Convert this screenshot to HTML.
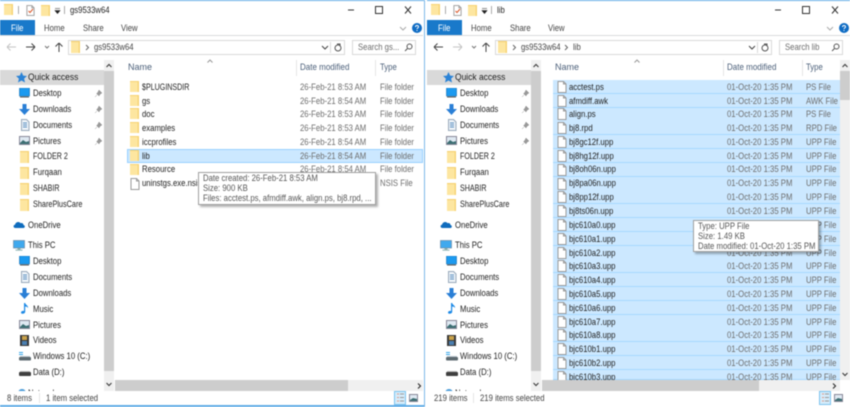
<!DOCTYPE html>
<html><head><meta charset="utf-8"><style>
html,body{margin:0;padding:0;width:850px;height:407px;overflow:hidden;background:#fff}
body{font-family:"Liberation Sans",sans-serif;font-size:9px;color:#222;filter:blur(.4px)}
.w{position:absolute;top:0;height:407px;overflow:hidden;background:#fff}
.w div,.w span,.w svg{position:absolute}
.t{white-space:nowrap;line-height:12px;height:12px;transform:scaleX(.86);transform-origin:0 50%}
.q{transform:scaleX(.94)}.c{transform:scaleX(.79)}.s{transform:scaleX(.81)}.n{transform:none}
.h{color:#4c607a}.h2{color:#4c607a;transform:scaleX(.89)}.g{color:#6d6d6d}.tab{color:#444}
.tip{background:#fff;border:1px solid #a0a0a0;box-shadow:2px 2px 2px rgba(0,0,0,.3)}
.tip .t{color:#575757;left:4px}
.sel{background:#cce8ff;border-bottom:1px solid #a6d8ff;box-sizing:border-box}
</style></head><body>
<svg width="0" height="0" style="position:absolute"><defs>
<symbol id="fo" viewBox="0 0 10 11" preserveAspectRatio="none"><path d="M0 0h10v11H0z" fill="#f6d272"/><path d="M0 1h8.500v10H0z" fill="#fde6a0"/></symbol>
<symbol id="fi" viewBox="0 0 10 12"><path d="M1 .5h5.500L9 3v8.500H1z" fill="#fff" stroke="#9a9a9a"/><path d="M6.500.5V3H9" fill="none" stroke="#9a9a9a"/></symbol>
<symbol id="de" viewBox="0 0 11 10"><rect x=".5" y="0" width="10" height="8" fill="#1c9af0" stroke="#0b6cb5" stroke-width=".6"/><rect x="1" y="8.500" width="9" height="1" fill="#555"/></symbol>
<symbol id="dl" viewBox="0 0 11 11"><path d="M3.500 0h4v5H11L5.500 11 0 5h3.500z" fill="#2a7fd6"/></symbol>
<symbol id="do" viewBox="0 0 10 12"><path d="M1.500.5h5L9 3v8.500H1.500z" fill="#eef3f8" stroke="#9ab"/><path d="M3 4h4M3 6h4M3 8h4" stroke="#5a8fc0"/></symbol>
<symbol id="pi" viewBox="0 0 11 9"><rect x=".5" y=".5" width="10" height="8" fill="#dfe9f2" stroke="#889"/><path d="M1 7l3-3 3 2 3-1v3H1z" fill="#3c6f73"/></symbol>
<symbol id="pn" viewBox="0 0 7 7"><path d="M4 0l3 3-1 .5-1.500 1.500-.5 1L1.500 3.500l1-.5L3.500 1zM2 5L0 7" fill="#999" stroke="#999" stroke-width=".5"/></symbol>
<symbol id="st" viewBox="0 0 11 11"><path d="M5.500 0l1.700 3.600 3.800.4-2.900 2.600.9 3.900-3.500-2-3.500 2 .9-3.900L0 4l3.800-.4z" fill="#2b83d6"/></symbol>
<symbol id="od" viewBox="0 0 12 7"><path d="M2.500 7C0 7 0 4 2 3.800 2.500 1 6 0 7.500 2.200 10 1.500 10.500 3.500 10.500 4 12.500 4.500 12 7 10.500 7z" fill="#0f6cbd"/></symbol>
<symbol id="pc" viewBox="0 0 12 11"><rect x=".5" y=".5" width="11" height="7.500" fill="#3fa9ee" stroke="#6b8aa5" stroke-width=".7"/><rect x="4.500" y="8" width="3" height="1.500" fill="#8aa"/><rect x="2.500" y="9.500" width="7" height="1.200" fill="#9bb"/></symbol>
<symbol id="mu" viewBox="0 0 8 11"><path d="M3 0h1.200c.3 2 3.300 2.500 2.800 5C6.500 3.800 5 3.500 4.200 3.500V9C4 11 0 11.500 0 9.500 0 8 2 7.500 3 8z" fill="#1e8ae6"/></symbol>
<symbol id="vi" viewBox="0 0 9 11"><rect width="9" height="11" fill="#3a3a3a"/><rect x="2" y="1" width="5" height="4" fill="#c9a24a"/><rect x="2" y="6" width="5" height="4" fill="#4a7fb0"/></symbol>
<symbol id="c" viewBox="0 0 12 9"><path d="M0 0h4v1H0zM0 2h4v1H0z" fill="#35a5e8"/><rect x="0" y="5" width="12" height="3.500" rx="1" fill="#5d6a70"/><rect x="1" y="4" width="10" height="1" fill="#b8c4cc"/></symbol>
<symbol id="d" viewBox="0 0 12 5"><rect x="0" y="1" width="12" height="4" rx="1" fill="#3f3f3f"/><rect x="1" y="0" width="10" height="1" fill="#bbb"/></symbol>
</defs></svg>

<!-- LEFT WINDOW -->
<div class="w" style="left:0;width:425px;border-right:1px solid #7db9e8;box-sizing:border-box">
<div style="left:0;top:0;width:425px;height:1px;background:#62ace6"></div>
<svg style="left:4px;top:4px" width="9" height="11"><use href="#fo"/></svg>
<div style="left:18px;top:6px;width:1px;height:8px;background:#aaa"></div>
<svg style="left:26px;top:5px" width="9" height="11"><use href="#fi"/><path d="M2.500 6l1.500 1.500L7 4" stroke="#d9582b" fill="none"/></svg>
<svg style="left:41px;top:5px" width="9" height="11"><use href="#fo"/></svg>
<svg style="left:54px;top:8px" width="7" height="6"><path d="M1 .5h5M1 2.500h5l-2.500 3z" stroke="#222" fill="#222" stroke-width=".6"/></svg>
<div style="left:64px;top:6px;width:1px;height:8px;background:#aaa"></div>
<div class="t" style="left:70px;top:4px">gs9533w64</div>
<svg style="left:345px;top:4px" width="70" height="12"><path d="M3 6h6" stroke="#333"/><rect x="30.500" y="2.500" width="7" height="7" fill="none" stroke="#333"/><path d="M60 2.500l6 7M66 2.500l-6 7" stroke="#333"/></svg>

<div style="left:0;top:20px;width:35px;height:15px;background:#1979ca"></div>
<div class="t" style="left:11px;top:22px;color:#fff">File</div>
<div class="t tab" style="left:44px;top:22px">Home</div>
<div class="t tab" style="left:83px;top:22px">Share</div>
<div class="t tab" style="left:121px;top:22px">View</div>
<svg style="left:399px;top:23px" width="24" height="12"><path d="M1 4l3 3 3-3" stroke="#aaa" fill="none"/><circle cx="18" cy="5" r="5" fill="#0f6cc4"/><path d="M16.500 4c0-2 3-2 3 0 0 1-1.500 1-1.500 2M18 7v1" stroke="#fff" fill="none"/></svg>
<div style="left:0;top:35px;width:423px;height:1px;background:#dadbdc"></div>

<svg style="left:5px;top:41px" width="62" height="13"><path d="M2 6h9M2 6l3.500-3.500M2 6l3.500 3.500" stroke="#c4c4c4" fill="none"/><path d="M21 6h9M30 6l-3.500-3.500M30 6l-3.500 3.500" stroke="#444" fill="none"/><path d="M40 5l2 2 2-2" stroke="#777" fill="none"/><path d="M54 11V2M54 2l-3.500 3.500M54 2l3.500 3.500" stroke="#444" fill="none"/></svg>
<div style="left:68px;top:40px;width:277px;height:15px;border:1px solid #d9d9d9;box-sizing:border-box"></div>
<svg style="left:71px;top:41px" width="9" height="12"><use href="#fo"/></svg>
<svg style="left:85px;top:44px" width="5" height="7"><path d="M1 1l2.500 2.500L1 6" stroke="#666" fill="none"/></svg>
<div class="t" style="left:94px;top:41px;color:#444">gs9533w64</div>
<svg style="left:321px;top:42px" width="24" height="11"><path d="M1 4l3 3 3-3" stroke="#444" fill="none"/><path d="M9.500 0v11" stroke="#d9d9d9"/><circle cx="17" cy="6" r="3" stroke="#555" fill="none"/><path d="M16 2h3v2" stroke="#555" fill="none"/></svg>
<div style="left:352px;top:40px;width:64px;height:15px;border:1px solid #d9d9d9;box-sizing:border-box"></div>
<div class="t g" style="left:358px;top:41px">Search gs...</div>
<svg style="left:404px;top:43px" width="9" height="9"><circle cx="5.500" cy="3.500" r="2.500" stroke="#555" fill="none"/><path d="M3.500 5.500L1 8" stroke="#555"/></svg>

<!-- nav -->
<div style="left:0;top:70px;width:104px;height:15px;background:#d9d9d9"></div>
<div style="left:104px;top:60px;width:10px;height:331px;background:#f0f0f0"></div>
<div style="left:104px;top:71px;width:10px;height:300px;background:#cdcdcd"></div>
<svg style="left:106px;top:63px" width="6" height="5"><path d="M.5 4L3 1.500 5.500 4" stroke="#444" fill="none" stroke-width="1.200"/></svg>
<svg style="left:106px;top:382px" width="6" height="5"><path d="M.5 1L3 3.500 5.500 1" stroke="#444" fill="none" stroke-width="1.200"/></svg>
<svg style="left:16px;top:72px" width="11" height="11"><use href="#st"/></svg><div class="t q" style="left:28px;top:71px">Quick access</div>
<svg style="left:19px;top:88px" width="11" height="10"><use href="#de"/></svg><div class="t" style="left:33px;top:87px">Desktop</div>
<svg style="left:19px;top:104px" width="11" height="11"><use href="#dl"/></svg><div class="t" style="left:33px;top:103px">Downloads</div>
<svg style="left:20px;top:119px" width="10" height="12"><use href="#do"/></svg><div class="t" style="left:33px;top:119px">Documents</div>
<svg style="left:19px;top:136px" width="11" height="9"><use href="#pi"/></svg><div class="t" style="left:33px;top:135px">Pictures</div>
<svg style="left:95px;top:90px" width="7" height="7"><use href="#pn"/></svg>
<svg style="left:95px;top:106px" width="7" height="7"><use href="#pn"/></svg>
<svg style="left:95px;top:122px" width="7" height="7"><use href="#pn"/></svg>
<svg style="left:95px;top:138px" width="7" height="7"><use href="#pn"/></svg>
<svg style="left:20px;top:151px" width="9" height="12"><use href="#fo"/></svg><div class="t c" style="left:33px;top:150px">FOLDER 2</div>
<svg style="left:20px;top:167px" width="9" height="12"><use href="#fo"/></svg><div class="t" style="left:33px;top:166px">Furqaan</div>
<svg style="left:20px;top:183px" width="9" height="12"><use href="#fo"/></svg><div class="t c" style="left:33px;top:182px">SHABIR</div>
<svg style="left:20px;top:199px" width="9" height="12"><use href="#fo"/></svg><div class="t s" style="left:33px;top:198px">SharePlusCare</div>
<svg style="left:13px;top:221px" width="12" height="7"><use href="#od"/></svg><div class="t" style="left:28px;top:219px">OneDrive</div>
<svg style="left:13px;top:240px" width="12" height="11"><use href="#pc"/></svg><div class="t" style="left:28px;top:239px">This PC</div>
<svg style="left:19px;top:256px" width="11" height="10"><use href="#de"/></svg><div class="t" style="left:33px;top:255px">Desktop</div>
<svg style="left:20px;top:271px" width="10" height="12"><use href="#do"/></svg><div class="t" style="left:33px;top:271px">Documents</div>
<svg style="left:19px;top:288px" width="11" height="11"><use href="#dl"/></svg><div class="t" style="left:33px;top:287px">Downloads</div>
<svg style="left:21px;top:303px" width="8" height="11"><use href="#mu"/></svg><div class="t" style="left:33px;top:303px">Music</div>
<svg style="left:19px;top:320px" width="11" height="9"><use href="#pi"/></svg><div class="t" style="left:33px;top:319px">Pictures</div>
<svg style="left:20px;top:335px" width="9" height="11"><use href="#vi"/></svg><div class="t" style="left:33px;top:334px">Videos</div>
<svg style="left:19px;top:352px" width="12" height="9"><use href="#c"/></svg><div class="t" style="left:33px;top:350px">Windows 10 (C:)</div>
<svg style="left:19px;top:371px" width="12" height="5"><use href="#d"/></svg><div class="t" style="left:33px;top:366px">Data (D:)</div>
<div style="left:0;top:388px;width:104px;height:3px;overflow:hidden"><svg style="left:17px;top:0" width="10" height="3"><circle cx="5" cy="5" r="4" fill="#4a9bd8"/></svg><div class="t" style="left:28px;top:-1px">Network</div></div>

<!-- list header -->
<svg style="left:207px;top:59px" width="6" height="4"><path d="M.5 3.500L3 1l2.500 2.500" stroke="#999" fill="none"/></svg>
<div class="t h n" style="left:128px;top:61px">Name</div>
<div style="left:296px;top:60px;width:1px;height:16px;background:#e5e5e5"></div>
<div class="t h2" style="left:300px;top:61px">Date modified</div>
<div style="left:375px;top:60px;width:1px;height:16px;background:#e5e5e5"></div>
<div class="t h" style="left:380px;top:61px">Type</div>

<div class="sel" style="left:127px;top:149px;width:296px;height:14px;border:1px solid #99d1ff"></div>

<svg style="left:130px;top:81px" width="9" height="11"><use href="#fo"/></svg><div class="t c" style="left:142px;top:81px">$PLUGINSDIR</div><div class="t g" style="left:300px;top:81px">26-Feb-21 8:53 AM</div><div class="t g" style="left:380px;top:81px">File folder</div>
<svg style="left:130px;top:95px" width="9" height="11"><use href="#fo"/></svg><div class="t" style="left:142px;top:95px">gs</div><div class="t g" style="left:300px;top:95px">26-Feb-21 8:54 AM</div><div class="t g" style="left:380px;top:95px">File folder</div>
<svg style="left:130px;top:108px" width="9" height="11"><use href="#fo"/></svg><div class="t" style="left:142px;top:108px">doc</div><div class="t g" style="left:300px;top:108px">26-Feb-21 8:53 AM</div><div class="t g" style="left:380px;top:108px">File folder</div>
<svg style="left:130px;top:122px" width="9" height="11"><use href="#fo"/></svg><div class="t" style="left:142px;top:122px">examples</div><div class="t g" style="left:300px;top:122px">26-Feb-21 8:53 AM</div><div class="t g" style="left:380px;top:122px">File folder</div>
<svg style="left:130px;top:136px" width="9" height="11"><use href="#fo"/></svg><div class="t" style="left:142px;top:136px">iccprofiles</div><div class="t g" style="left:300px;top:136px">26-Feb-21 8:54 AM</div><div class="t g" style="left:380px;top:136px">File folder</div>
<svg style="left:130px;top:150px" width="9" height="11"><use href="#fo"/></svg><div class="t" style="left:142px;top:150px">lib</div><div class="t g" style="left:300px;top:150px">26-Feb-21 8:54 AM</div><div class="t g" style="left:380px;top:150px">File folder</div>
<svg style="left:130px;top:164px" width="9" height="11"><use href="#fo"/></svg><div class="t" style="left:142px;top:163px">Resource</div><div class="t g" style="left:300px;top:163px">26-Feb-21 8:54 AM</div><div class="t g" style="left:380px;top:163px">File folder</div>
<svg style="left:130px;top:178px" width="10" height="12"><use href="#fi"/></svg><div class="t" style="left:142px;top:177px">uninstgs.exe.nsis</div><div class="t g" style="left:380px;top:177px">NSIS File</div>

<div class="tip" style="left:198px;top:172px;width:178px;height:33px;box-sizing:border-box">
<div class="t" style="top:-1px">Date created: 26-Feb-21 8:53 AM</div>
<div class="t" style="top:9px">Size: 900 KB</div>
<div class="t" style="top:19px">Files: acctest.ps, afmdiff.awk, align.ps, bj8.rpd, ...</div>
</div>

<div style="left:115px;top:380px;width:308px;height:11px;background:#f0f0f0"></div>
<div style="left:115px;top:380px;width:233px;height:11px;background:#cdcdcd"></div>
<svg style="left:417px;top:383px" width="5" height="6"><path d="M1 .5L3.500 3 1 5.500" stroke="#333" fill="none" stroke-width="1.200"/></svg>

<div class="t" style="left:7px;top:392px;color:#444">8 items</div>
<div style="left:39px;top:393px;width:1px;height:10px;background:#e5e5e5"></div>
<div class="t" style="left:46px;top:392px;color:#444">1 item selected</div>
<div style="left:394px;top:391px;width:12px;height:14px;background:#d5ecfb;border:1px solid #7cc4ef;box-sizing:border-box"></div>
<svg style="left:396px;top:393px" width="24" height="10"><path d="M1 1h2M1 4.500h2M1 8h2" stroke="#d98" /><path d="M4 1h4M4 4.500h4M4 8h4" stroke="#999"/><rect x="13.500" y="1.500" width="8" height="7" fill="#dfe9f2" stroke="#889"/><path d="M14 7l3-2 4 1v2h-7z" fill="#3c6f73"/></svg>
<div style="left:0;top:405px;width:425px;height:2px;background:#62ace6"></div>
</div>

<!-- RIGHT WINDOW -->
<div class="w" style="left:427px;width:423px">
<div style="left:0;top:0;width:423px;height:1px;background:#62ace6"></div>
<svg style="left:4px;top:4px" width="9" height="11"><use href="#fo"/></svg>
<div style="left:18px;top:6px;width:1px;height:8px;background:#aaa"></div>
<svg style="left:26px;top:5px" width="9" height="11"><use href="#fi"/><path d="M2.500 6l1.500 1.500L7 4" stroke="#d9582b" fill="none"/></svg>
<svg style="left:41px;top:5px" width="9" height="11"><use href="#fo"/></svg>
<svg style="left:54px;top:8px" width="7" height="6"><path d="M1 .5h5M1 2.500h5l-2.500 3z" stroke="#222" fill="#222" stroke-width=".6"/></svg>
<div style="left:64px;top:6px;width:1px;height:8px;background:#aaa"></div>
<div class="t" style="left:70px;top:4px">lib</div>
<svg style="left:345px;top:4px" width="70" height="12"><path d="M3 6h6" stroke="#333"/><rect x="30.500" y="2.500" width="7" height="7" fill="none" stroke="#333"/><path d="M60 2.500l6 7M66 2.500l-6 7" stroke="#333"/></svg>

<div style="left:0;top:20px;width:35px;height:15px;background:#1979ca"></div>
<div class="t" style="left:11px;top:22px;color:#fff">File</div>
<div class="t tab" style="left:44px;top:22px">Home</div>
<div class="t tab" style="left:83px;top:22px">Share</div>
<div class="t tab" style="left:121px;top:22px">View</div>
<svg style="left:399px;top:23px" width="24" height="12"><path d="M1 4l3 3 3-3" stroke="#aaa" fill="none"/><circle cx="18" cy="5" r="5" fill="#0f6cc4"/><path d="M16.500 4c0-2 3-2 3 0 0 1-1.500 1-1.500 2M18 7v1" stroke="#fff" fill="none"/></svg>
<div style="left:0;top:35px;width:423px;height:1px;background:#dadbdc"></div>

<svg style="left:5px;top:41px" width="62" height="13"><path d="M2 6h9M2 6l3.500-3.500M2 6l3.500 3.500" stroke="#444" fill="none"/><path d="M21 6h9M30 6l-3.500-3.500M30 6l-3.500 3.500" stroke="#c4c4c4" fill="none"/><path d="M40 5l2 2 2-2" stroke="#777" fill="none"/><path d="M54 11V2M54 2l-3.500 3.500M54 2l3.500 3.500" stroke="#444" fill="none"/></svg>
<div style="left:68px;top:40px;width:277px;height:15px;border:1px solid #d9d9d9;box-sizing:border-box"></div>
<svg style="left:71px;top:41px" width="9" height="12"><use href="#fo"/></svg>
<svg style="left:85px;top:44px" width="5" height="7"><path d="M1 1l2.500 2.500L1 6" stroke="#666" fill="none"/></svg>
<div class="t" style="left:94px;top:41px;color:#444">gs9533w64</div>
<svg style="left:137px;top:44px" width="5" height="7"><path d="M1 1l2.500 2.500L1 6" stroke="#666" fill="none"/></svg>
<div class="t" style="left:146px;top:41px;color:#444">lib</div>
<svg style="left:321px;top:42px" width="24" height="11"><path d="M1 4l3 3 3-3" stroke="#444" fill="none"/><path d="M9.500 0v11" stroke="#d9d9d9"/><circle cx="17" cy="6" r="3" stroke="#555" fill="none"/><path d="M16 2h3v2" stroke="#555" fill="none"/></svg>
<div style="left:352px;top:40px;width:64px;height:15px;border:1px solid #d9d9d9;box-sizing:border-box"></div>
<div class="t g" style="left:358px;top:41px">Search lib</div>
<svg style="left:404px;top:43px" width="9" height="9"><circle cx="5.500" cy="3.500" r="2.500" stroke="#555" fill="none"/><path d="M3.500 5.500L1 8" stroke="#555"/></svg>

<!-- nav -->
<div style="left:0;top:70px;width:104px;height:15px;background:#d9d9d9"></div>
<div style="left:104px;top:60px;width:10px;height:331px;background:#f0f0f0"></div>
<div style="left:104px;top:71px;width:10px;height:300px;background:#cdcdcd"></div>
<svg style="left:106px;top:63px" width="6" height="5"><path d="M.5 4L3 1.500 5.500 4" stroke="#444" fill="none" stroke-width="1.200"/></svg>
<svg style="left:106px;top:382px" width="6" height="5"><path d="M.5 1L3 3.500 5.500 1" stroke="#444" fill="none" stroke-width="1.200"/></svg>
<svg style="left:16px;top:72px" width="11" height="11"><use href="#st"/></svg><div class="t q" style="left:28px;top:71px">Quick access</div>
<svg style="left:19px;top:88px" width="11" height="10"><use href="#de"/></svg><div class="t" style="left:33px;top:87px">Desktop</div>
<svg style="left:19px;top:104px" width="11" height="11"><use href="#dl"/></svg><div class="t" style="left:33px;top:103px">Downloads</div>
<svg style="left:20px;top:119px" width="10" height="12"><use href="#do"/></svg><div class="t" style="left:33px;top:119px">Documents</div>
<svg style="left:19px;top:136px" width="11" height="9"><use href="#pi"/></svg><div class="t" style="left:33px;top:135px">Pictures</div>
<svg style="left:95px;top:90px" width="7" height="7"><use href="#pn"/></svg>
<svg style="left:95px;top:106px" width="7" height="7"><use href="#pn"/></svg>
<svg style="left:95px;top:122px" width="7" height="7"><use href="#pn"/></svg>
<svg style="left:95px;top:138px" width="7" height="7"><use href="#pn"/></svg>
<svg style="left:20px;top:151px" width="9" height="12"><use href="#fo"/></svg><div class="t c" style="left:33px;top:150px">FOLDER 2</div>
<svg style="left:20px;top:167px" width="9" height="12"><use href="#fo"/></svg><div class="t" style="left:33px;top:166px">Furqaan</div>
<svg style="left:20px;top:183px" width="9" height="12"><use href="#fo"/></svg><div class="t c" style="left:33px;top:182px">SHABIR</div>
<svg style="left:20px;top:199px" width="9" height="12"><use href="#fo"/></svg><div class="t s" style="left:33px;top:198px">SharePlusCare</div>
<svg style="left:13px;top:221px" width="12" height="7"><use href="#od"/></svg><div class="t" style="left:28px;top:219px">OneDrive</div>
<svg style="left:13px;top:240px" width="12" height="11"><use href="#pc"/></svg><div class="t" style="left:28px;top:239px">This PC</div>
<svg style="left:19px;top:256px" width="11" height="10"><use href="#de"/></svg><div class="t" style="left:33px;top:255px">Desktop</div>
<svg style="left:20px;top:271px" width="10" height="12"><use href="#do"/></svg><div class="t" style="left:33px;top:271px">Documents</div>
<svg style="left:19px;top:288px" width="11" height="11"><use href="#dl"/></svg><div class="t" style="left:33px;top:287px">Downloads</div>
<svg style="left:21px;top:303px" width="8" height="11"><use href="#mu"/></svg><div class="t" style="left:33px;top:303px">Music</div>
<svg style="left:19px;top:320px" width="11" height="9"><use href="#pi"/></svg><div class="t" style="left:33px;top:319px">Pictures</div>
<svg style="left:20px;top:335px" width="9" height="11"><use href="#vi"/></svg><div class="t" style="left:33px;top:334px">Videos</div>
<svg style="left:19px;top:352px" width="12" height="9"><use href="#c"/></svg><div class="t" style="left:33px;top:350px">Windows 10 (C:)</div>
<svg style="left:19px;top:371px" width="12" height="5"><use href="#d"/></svg><div class="t" style="left:33px;top:366px">Data (D:)</div>
<div style="left:0;top:388px;width:104px;height:3px;overflow:hidden"><svg style="left:17px;top:0" width="10" height="3"><circle cx="5" cy="5" r="4" fill="#4a9bd8"/></svg><div class="t" style="left:28px;top:-1px">Network</div></div>

<!-- list header -->
<svg style="left:207px;top:59px" width="6" height="4"><path d="M.5 3.500L3 1l2.500 2.500" stroke="#999" fill="none"/></svg>
<div class="t h n" style="left:128px;top:61px">Name</div>
<div style="left:296px;top:60px;width:1px;height:16px;background:#e5e5e5"></div>
<div class="t h2" style="left:300px;top:61px">Date modified</div>
<div style="left:375px;top:60px;width:1px;height:16px;background:#e5e5e5"></div>
<div class="t h" style="left:379px;top:61px">Type</div>

<!-- selected rows -->
<div class="sel" style="left:126px;top:80px;width:287px;height:14px"></div>
<div class="sel" style="left:126px;top:94px;width:287px;height:14px"></div>
<div class="sel" style="left:126px;top:108px;width:287px;height:14px"></div>
<div class="sel" style="left:126px;top:121px;width:287px;height:14px"></div>
<div class="sel" style="left:126px;top:135px;width:287px;height:14px"></div>
<div class="sel" style="left:126px;top:149px;width:287px;height:14px"></div>
<div class="sel" style="left:126px;top:163px;width:287px;height:14px"></div>
<div class="sel" style="left:126px;top:177px;width:287px;height:14px"></div>
<div class="sel" style="left:126px;top:190px;width:287px;height:14px"></div>
<div class="sel" style="left:126px;top:204px;width:287px;height:14px"></div>
<div class="sel" style="left:126px;top:218px;width:287px;height:14px"></div>
<div class="sel" style="left:126px;top:232px;width:287px;height:14px"></div>
<div class="sel" style="left:126px;top:246px;width:287px;height:14px"></div>
<div class="sel" style="left:126px;top:259px;width:287px;height:14px"></div>
<div class="sel" style="left:126px;top:273px;width:287px;height:14px"></div>
<div class="sel" style="left:126px;top:287px;width:287px;height:14px"></div>
<div class="sel" style="left:126px;top:301px;width:287px;height:14px"></div>
<div class="sel" style="left:126px;top:315px;width:287px;height:14px"></div>
<div class="sel" style="left:126px;top:328px;width:287px;height:14px"></div>
<div class="sel" style="left:126px;top:342px;width:287px;height:14px"></div>
<div class="sel" style="left:126px;top:356px;width:287px;height:14px"></div>
<div class="sel" style="left:126px;top:370px;width:287px;height:10px"></div>

<svg style="left:130px;top:81px" width="10" height="12"><use href="#fi"/></svg><div class="t" style="left:142px;top:81px">acctest.ps</div><div class="t g" style="left:300px;top:81px">01-Oct-20 1:35 PM</div><div class="t g" style="left:379px;top:81px">PS File</div>
<svg style="left:130px;top:95px" width="10" height="12"><use href="#fi"/></svg><div class="t" style="left:142px;top:95px">afmdiff.awk</div><div class="t g" style="left:300px;top:95px">01-Oct-20 1:35 PM</div><div class="t g" style="left:379px;top:95px">AWK File</div>
<svg style="left:130px;top:108px" width="10" height="12"><use href="#fi"/></svg><div class="t" style="left:142px;top:108px">align.ps</div><div class="t g" style="left:300px;top:108px">01-Oct-20 1:35 PM</div><div class="t g" style="left:379px;top:108px">PS File</div>
<svg style="left:130px;top:122px" width="10" height="12"><use href="#fi"/></svg><div class="t" style="left:142px;top:122px">bj8.rpd</div><div class="t g" style="left:300px;top:122px">01-Oct-20 1:35 PM</div><div class="t g" style="left:379px;top:122px">RPD File</div>
<svg style="left:130px;top:136px" width="10" height="12"><use href="#fi"/></svg><div class="t" style="left:142px;top:136px">bj8gc12f.upp</div><div class="t g" style="left:300px;top:136px">01-Oct-20 1:35 PM</div><div class="t g" style="left:379px;top:136px">UPP File</div>
<svg style="left:130px;top:150px" width="10" height="12"><use href="#fi"/></svg><div class="t" style="left:142px;top:150px">bj8hg12f.upp</div><div class="t g" style="left:300px;top:150px">01-Oct-20 1:35 PM</div><div class="t g" style="left:379px;top:150px">UPP File</div>
<svg style="left:130px;top:164px" width="10" height="12"><use href="#fi"/></svg><div class="t" style="left:142px;top:163px">bj8oh06n.upp</div><div class="t g" style="left:300px;top:163px">01-Oct-20 1:35 PM</div><div class="t g" style="left:379px;top:163px">UPP File</div>
<svg style="left:130px;top:178px" width="10" height="12"><use href="#fi"/></svg><div class="t" style="left:142px;top:177px">bj8pa06n.upp</div><div class="t g" style="left:300px;top:177px">01-Oct-20 1:35 PM</div><div class="t g" style="left:379px;top:177px">UPP File</div>
<svg style="left:130px;top:191px" width="10" height="12"><use href="#fi"/></svg><div class="t" style="left:142px;top:191px">bj8pp12f.upp</div><div class="t g" style="left:300px;top:191px">01-Oct-20 1:35 PM</div><div class="t g" style="left:379px;top:191px">UPP File</div>
<svg style="left:130px;top:205px" width="10" height="12"><use href="#fi"/></svg><div class="t" style="left:142px;top:205px">bj8ts06n.upp</div><div class="t g" style="left:300px;top:205px">01-Oct-20 1:35 PM</div><div class="t g" style="left:379px;top:205px">UPP File</div>
<svg style="left:130px;top:219px" width="10" height="12"><use href="#fi"/></svg><div class="t" style="left:142px;top:219px">bjc610a0.upp</div><div class="t g" style="left:300px;top:219px">01-Oct-20 1:35 PM</div><div class="t g" style="left:379px;top:219px">UPP File</div>
<svg style="left:130px;top:233px" width="10" height="12"><use href="#fi"/></svg><div class="t" style="left:142px;top:233px">bjc610a1.upp</div><div class="t g" style="left:300px;top:233px">01-Oct-20 1:35 PM</div><div class="t g" style="left:379px;top:233px">UPP File</div>
<svg style="left:130px;top:247px" width="10" height="12"><use href="#fi"/></svg><div class="t" style="left:142px;top:247px">bjc610a2.upp</div><div class="t g" style="left:300px;top:247px">01-Oct-20 1:35 PM</div><div class="t g" style="left:379px;top:247px">UPP File</div>
<svg style="left:130px;top:260px" width="10" height="12"><use href="#fi"/></svg><div class="t" style="left:142px;top:260px">bjc610a3.upp</div><div class="t g" style="left:300px;top:260px">01-Oct-20 1:35 PM</div><div class="t g" style="left:379px;top:260px">UPP File</div>
<svg style="left:130px;top:274px" width="10" height="12"><use href="#fi"/></svg><div class="t" style="left:142px;top:274px">bjc610a4.upp</div><div class="t g" style="left:300px;top:274px">01-Oct-20 1:35 PM</div><div class="t g" style="left:379px;top:274px">UPP File</div>
<svg style="left:130px;top:288px" width="10" height="12"><use href="#fi"/></svg><div class="t" style="left:142px;top:288px">bjc610a5.upp</div><div class="t g" style="left:300px;top:288px">01-Oct-20 1:35 PM</div><div class="t g" style="left:379px;top:288px">UPP File</div>
<svg style="left:130px;top:302px" width="10" height="12"><use href="#fi"/></svg><div class="t" style="left:142px;top:302px">bjc610a6.upp</div><div class="t g" style="left:300px;top:302px">01-Oct-20 1:35 PM</div><div class="t g" style="left:379px;top:302px">UPP File</div>
<svg style="left:130px;top:316px" width="10" height="12"><use href="#fi"/></svg><div class="t" style="left:142px;top:316px">bjc610a7.upp</div><div class="t g" style="left:300px;top:316px">01-Oct-20 1:35 PM</div><div class="t g" style="left:379px;top:316px">UPP File</div>
<svg style="left:130px;top:329px" width="10" height="12"><use href="#fi"/></svg><div class="t" style="left:142px;top:329px">bjc610a8.upp</div><div class="t g" style="left:300px;top:329px">01-Oct-20 1:35 PM</div><div class="t g" style="left:379px;top:329px">UPP File</div>
<svg style="left:130px;top:343px" width="10" height="12"><use href="#fi"/></svg><div class="t" style="left:142px;top:343px">bjc610b1.upp</div><div class="t g" style="left:300px;top:343px">01-Oct-20 1:35 PM</div><div class="t g" style="left:379px;top:343px">UPP File</div>
<svg style="left:130px;top:357px" width="10" height="12"><use href="#fi"/></svg><div class="t" style="left:142px;top:357px">bjc610b2.upp</div><div class="t g" style="left:300px;top:357px">01-Oct-20 1:35 PM</div><div class="t g" style="left:379px;top:357px">UPP File</div>
<svg style="left:130px;top:371px" width="10" height="9"><use href="#fi" height="12"/></svg><div class="t" style="left:142px;top:371px;height:9px;overflow:hidden">bjc610b3.upp</div><div class="t g" style="left:300px;top:371px;height:9px;overflow:hidden">01-Oct-20 1:35 PM</div><div class="t g" style="left:379px;top:371px;height:9px;overflow:hidden">UPP File</div>

<div class="tip" style="left:266px;top:220px;width:126px;height:32px;box-sizing:border-box">
<div class="t" style="top:-1px">Type: UPP File</div>
<div class="t" style="top:9px">Size: 1.49 KB</div>
<div class="t" style="top:19px">Date modified: 01-Oct-20 1:35 PM</div>
</div>

<div style="left:413px;top:60px;width:10px;height:320px;background:#f0f0f0"></div>
<div style="left:413px;top:71px;width:10px;height:29px;background:#cdcdcd"></div>
<svg style="left:415px;top:63px" width="6" height="5"><path d="M.5 4L3 1.500 5.500 4" stroke="#444" fill="none" stroke-width="1.200"/></svg>
<svg style="left:415px;top:372px" width="6" height="5"><path d="M.5 1L3 3.500 5.500 1" stroke="#444" fill="none" stroke-width="1.200"/></svg>

<div style="left:115px;top:380px;width:298px;height:11px;background:#f0f0f0"></div>
<div style="left:115px;top:380px;width:217px;height:11px;background:#cdcdcd"></div>
<svg style="left:405px;top:383px" width="5" height="6"><path d="M1 .5L3.500 3 1 5.500" stroke="#333" fill="none" stroke-width="1.200"/></svg>

<div class="t" style="left:7px;top:392px;color:#444">219 items</div>
<div style="left:46px;top:393px;width:1px;height:10px;background:#e5e5e5"></div>
<div class="t" style="left:53px;top:392px;color:#444">219 items selected</div>
<div style="left:392px;top:391px;width:12px;height:14px;background:#d5ecfb;border:1px solid #7cc4ef;box-sizing:border-box"></div>
<svg style="left:394px;top:393px" width="24" height="10"><path d="M1 1h2M1 4.500h2M1 8h2" stroke="#d98" /><path d="M4 1h4M4 4.500h4M4 8h4" stroke="#999"/><rect x="13.500" y="1.500" width="8" height="7" fill="#dfe9f2" stroke="#889"/><path d="M14 7l3-2 4 1v2h-7z" fill="#3c6f73"/></svg>
</div>
</body></html>
